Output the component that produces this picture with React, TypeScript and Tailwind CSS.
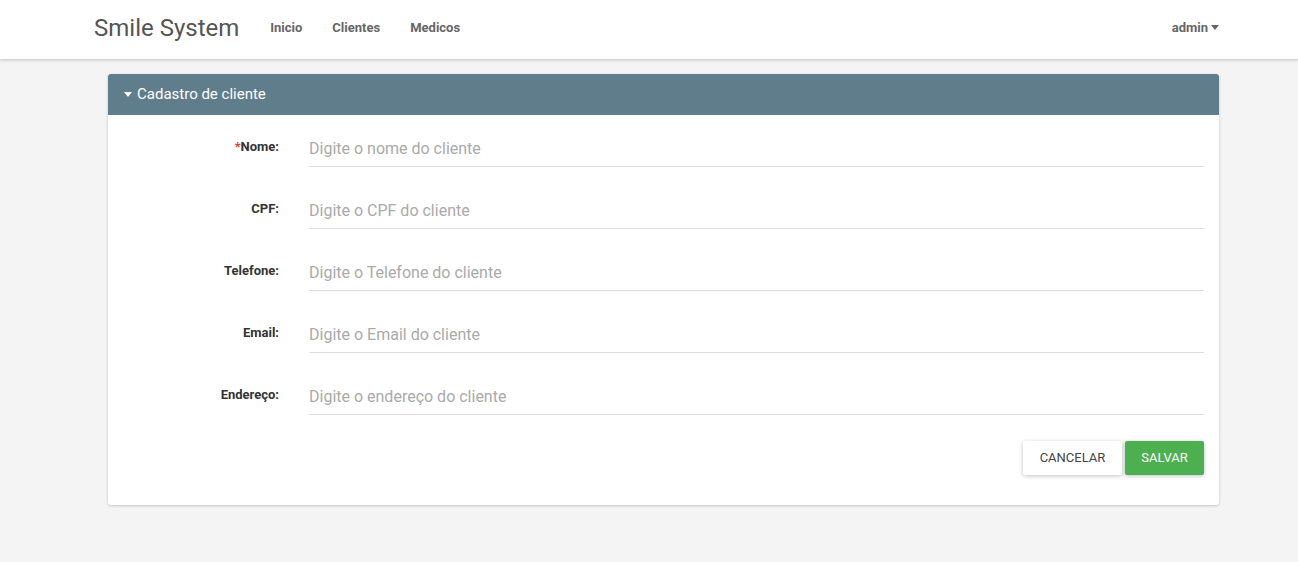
const fields = [
  { label: "Nome:", placeholder: "Digite o nome do cliente", required: true },
  { label: "CPF:", placeholder: "Digite o CPF do cliente" },
  { label: "Telefone:", placeholder: "Digite o Telefone do cliente" },
  { label: "Email:", placeholder: "Digite o Email do cliente" },
  { label: "Endereço:", placeholder: "Digite o endereço do cliente" },
];

function Caret({ className = "" }: { className?: string }) {
  return (
    <svg viewBox="0 0 8 5" className={className} aria-hidden>
      <path d="M0 0 H8 L4 5 Z" fill="currentColor" />
    </svg>
  );
}

export default function App() {
  return (
    <div className="min-h-[562px] bg-[#f4f4f4] font-['Roboto',sans-serif]">
      {/* Navbar */}
      <nav className="h-[60px] bg-white border-b border-[#d5d5d5] shadow-[0_1px_3px_rgba(0,0,0,0.12)]">
        <div className="mx-auto w-[1170px] px-[15px] h-full flex items-center">
          <span className="pl-[15px] text-[24px] text-[#555] leading-none -mt-[4px]">Smile System</span>
          <div className="flex items-center gap-[30px] ml-[31px] text-[13px] font-bold text-[#666] -mt-[4px]">
            <span>Inicio</span>
            <span>Clientes</span>
            <span>Medicos</span>
          </div>
          <div className="ml-auto flex items-center gap-[3px] text-[13px] font-bold text-[#666] -mt-[4px]">
            <span>admin</span>
            <Caret className="w-[8px] h-[5px]" />
          </div>
        </div>
      </nav>

      {/* Panel */}
      <div className="mx-auto w-[1170px] pt-[14px] pl-[44px] pr-[15px]">
        <div className="bg-white rounded-[3px] shadow-[0_1px_3px_rgba(0,0,0,0.2)] overflow-hidden">
          <div className="h-[41px] bg-[#607d8b] flex items-center gap-[5px] pl-[16px] text-white text-[15px]">
            <Caret className="w-[8px] h-[5px]" />
            <span>Cadastro de cliente</span>
          </div>
          <div className="pt-[16px] pb-[30px] pr-[15px]">
            {fields.map((f) => (
              <div key={f.label} className="flex mb-[26px]">
                <label className="w-[171px] pt-[6px] text-right text-[13px] font-bold text-[#333]">
                  {f.required && <span className="text-[#e53935]">*</span>}
                  {f.label}
                </label>
                <input
                  className="ml-[30px] flex-1 h-[36px] border-b border-[#ddd] text-[16px] text-[#333] placeholder:text-[#aaa] outline-none bg-transparent"
                  placeholder={f.placeholder}
                />
              </div>
            ))}
            <div className="flex justify-end gap-[3px]">
              <button className="w-[99px] h-[34px] rounded-[2px] bg-white text-[13px] text-[#444] shadow-[0_1px_4px_rgba(0,0,0,0.25)]">
                CANCELAR
              </button>
              <button className="w-[79px] h-[34px] rounded-[2px] bg-[#4caf50] text-[13px] text-white shadow-[0_1px_4px_rgba(0,0,0,0.25)]">
                SALVAR
              </button>
            </div>
          </div>
        </div>
      </div>
    </div>
  );
}
